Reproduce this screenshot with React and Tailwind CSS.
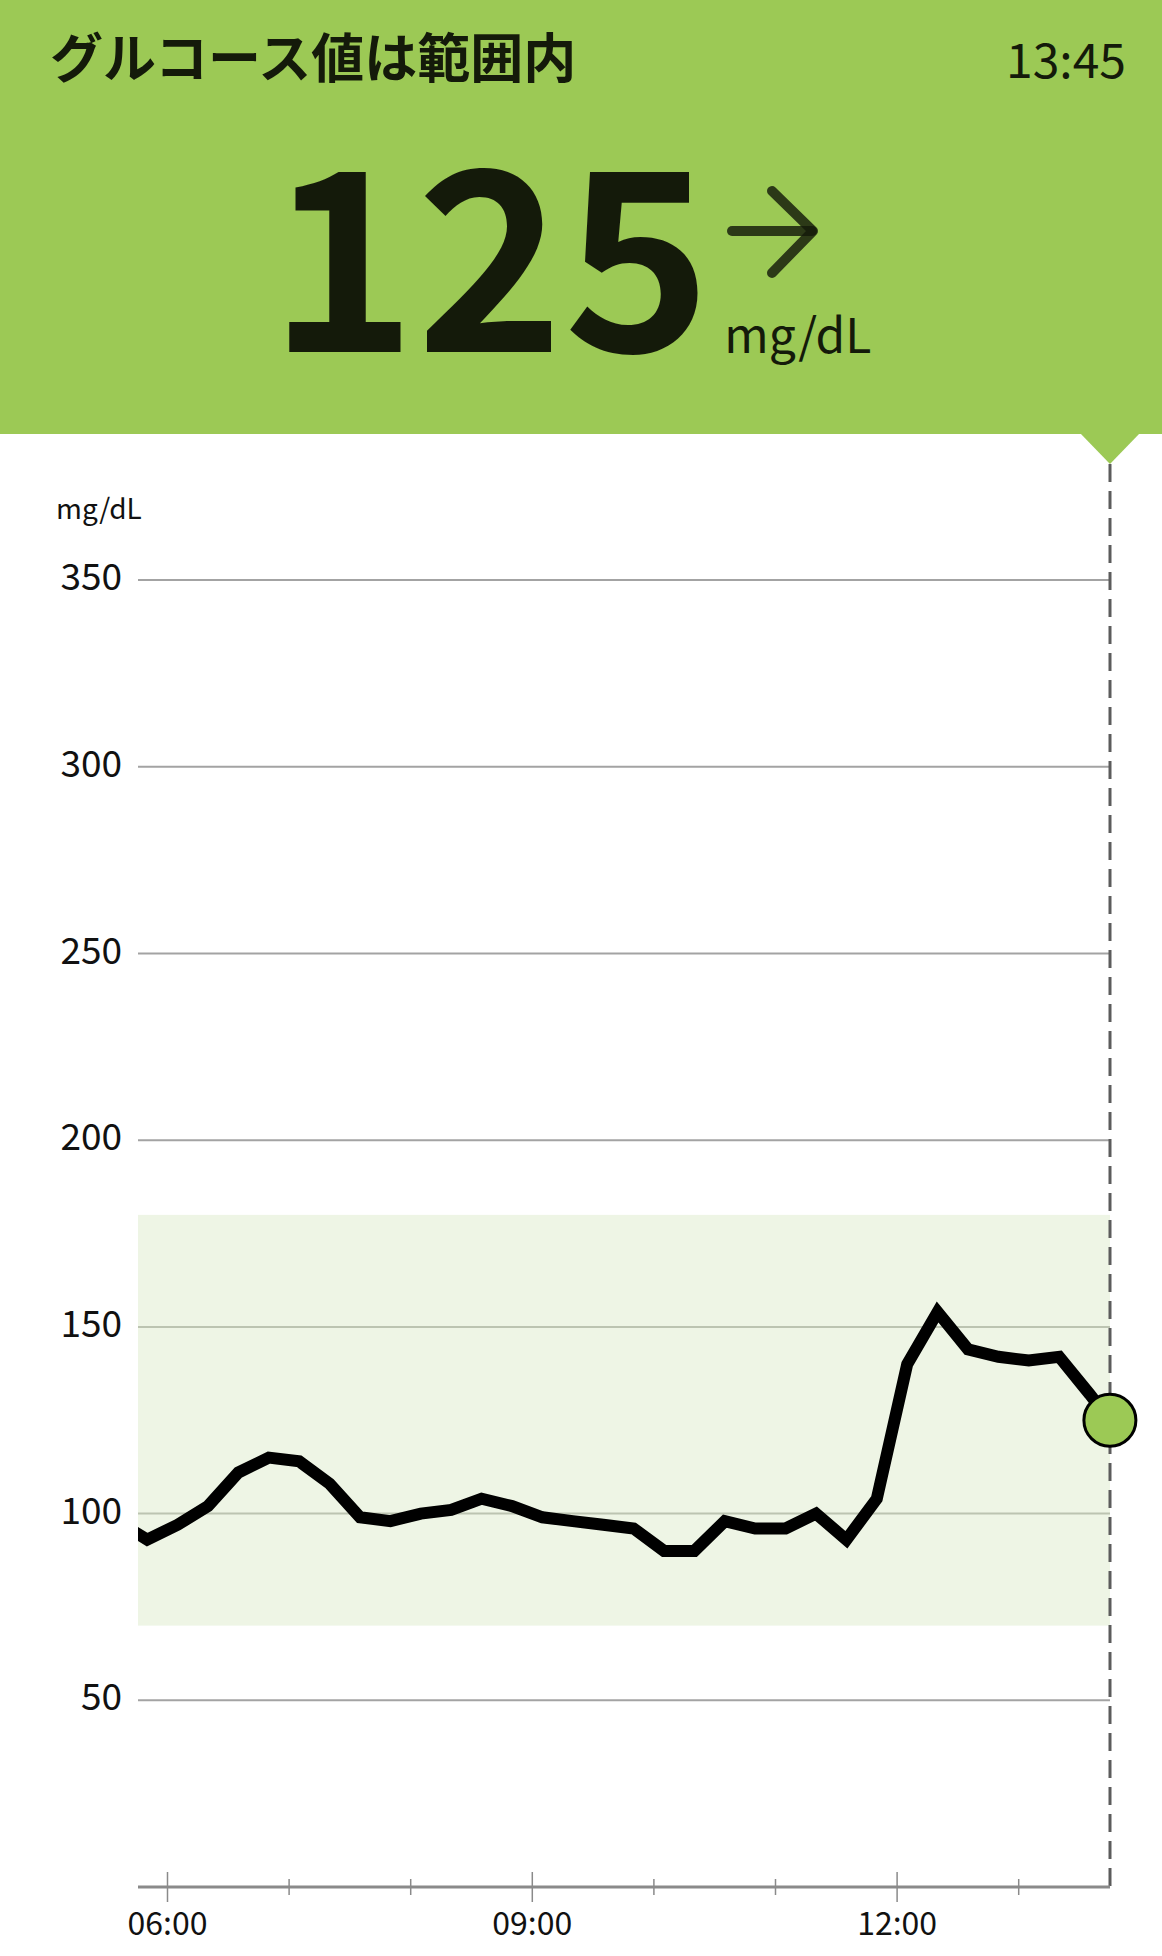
const GREEN = "#9cc955";

// glucose readings every 15 min, minutes from 06:00
const readings = [
  [-25, 98], [-10, 93], [5, 97], [20, 102], [35, 111], [50, 115], [65, 114],
  [80, 108], [95, 99], [110, 98], [125, 100], [140, 101], [155, 104], [170, 102],
  [185, 99], [200, 98], [215, 97], [230, 96], [245, 90], [260, 90], [275, 98],
  [290, 96], [305, 96], [320, 100], [335, 93], [350, 104], [365, 140], [380, 154],
  [395, 144], [410, 142], [425, 141], [440, 142], [455, 132], [465, 125]
];

const X0 = 138;
const X1 = 1110;
const AXIS = 1453;
const xAt = (min) => 167.5 + (min * 121.6) / 60;
const yAt = (v) => AXIS - v * 3.734;

const gridValues = [350, 300, 250, 200, 150, 100, 50];
const hours = [0, 1, 2, 3, 4, 5, 6, 7];
const hourLabels = { 0: "06:00", 3: "09:00", 6: "12:00" };

function ArrowRight() {
  return (
    <svg width="100" height="100" viewBox="0 0 100 100" className="block">
      <g stroke="rgba(20,26,10,0.82)" strokeWidth="10" strokeLinecap="round" fill="none">
        <line x1="8" y1="53" x2="88" y2="53" />
        <polyline points="48,13 89,53 48,95" strokeLinejoin="round" />
      </g>
    </svg>
  );
}

function Chart() {
  const pts = readings.map(([m, v]) => `${xAt(m).toFixed(1)},${yAt(v).toFixed(1)}`).join(" ");
  const last = readings[readings.length - 1];
  return (
    <svg width="1162" height="1522" viewBox="0 0 1162 1522" className="block" style={{ fontFamily: "'Noto Sans CJK JP', 'Noto Sans', sans-serif" }}>
      <defs>
        <clipPath id="plot">
          <rect x={X0} y="0" width={X1 - X0 + 40} height={AXIS} />
        </clipPath>
      </defs>

      {/* target range */}
      <rect x={X0} y={yAt(180)} width={X1 - X0} height={yAt(70) - yAt(180)} fill="#eef5e5" />

      {gridValues.map((v) => (
        <g key={v}>
          <line x1={X0} x2={X1} y1={yAt(v)} y2={yAt(v)} stroke={v <= 150 && v >= 100 ? "#bcc4b1" : "#a3a3a3"} strokeWidth="2" />
          <text x="122" y={yAt(v) + 10} textAnchor="end" fontSize="37" fill="#111">{v}</text>
        </g>
      ))}

      <text x="56" y="85" fontSize="28" fill="#111">mg/dL</text>

      {/* pointer from header */}
      <polygon points="1080,-1 1140,-1 1110,30" fill={GREEN} />
      <line x1="1110" x2="1110" y1="30" y2={AXIS} stroke="#5c5c5c" strokeWidth="3" strokeDasharray="18 9" />

      {/* x axis */}
      <line x1={X0} x2={X1} y1={AXIS} y2={AXIS} stroke="#8a8a8a" strokeWidth="3" />
      {hours.map((h) => {
        const x = xAt(h * 60);
        const major = hourLabels[h];
        return (
          <g key={h}>
            <line x1={x} x2={x} y1={AXIS - (major ? 15 : 8)} y2={AXIS + (major ? 15 : 8)} stroke="#8a8a8a" strokeWidth="1.5" />
            {major && (
              <text x={x} y="1501" textAnchor="middle" fontSize="32" fill="#111">{major}</text>
            )}
          </g>
        );
      })}

      <g clipPath="url(#plot)">
        <polyline points={pts} fill="none" stroke="#000" strokeWidth="12" strokeLinejoin="miter" strokeMiterlimit="2" />
      </g>
      <circle cx={xAt(last[0])} cy={yAt(last[1])} r="26" fill={GREEN} stroke="#000" strokeWidth="3" />
    </svg>
  );
}

export default function App() {
  return (
    <div className="w-[1162px] min-h-[1956px] bg-white text-[#141a0a]" style={{ fontFamily: "'Noto Sans CJK JP', 'Noto Sans', sans-serif" }}>
      <header className="h-[434px] bg-[#9cc955] pl-[50px] pr-[36px]">
        <div className="flex items-baseline justify-between pt-[29px]">
          <h1 className="text-[53px] font-bold leading-none">グルコース値は範囲内</h1>
          <span className="text-[48px] leading-none">13:45</span>
        </div>
        <div className="mt-[36px] flex items-end justify-center pr-[36px]">
          <span className="text-[250px] font-bold leading-none">125</span>
          <div className="ml-[13px] mb-[12px] flex flex-col">
            <ArrowRight />
            <span className="mt-[30px] text-[48px] leading-none">mg/dL</span>
          </div>
        </div>
      </header>
      <Chart />
    </div>
  );
}
